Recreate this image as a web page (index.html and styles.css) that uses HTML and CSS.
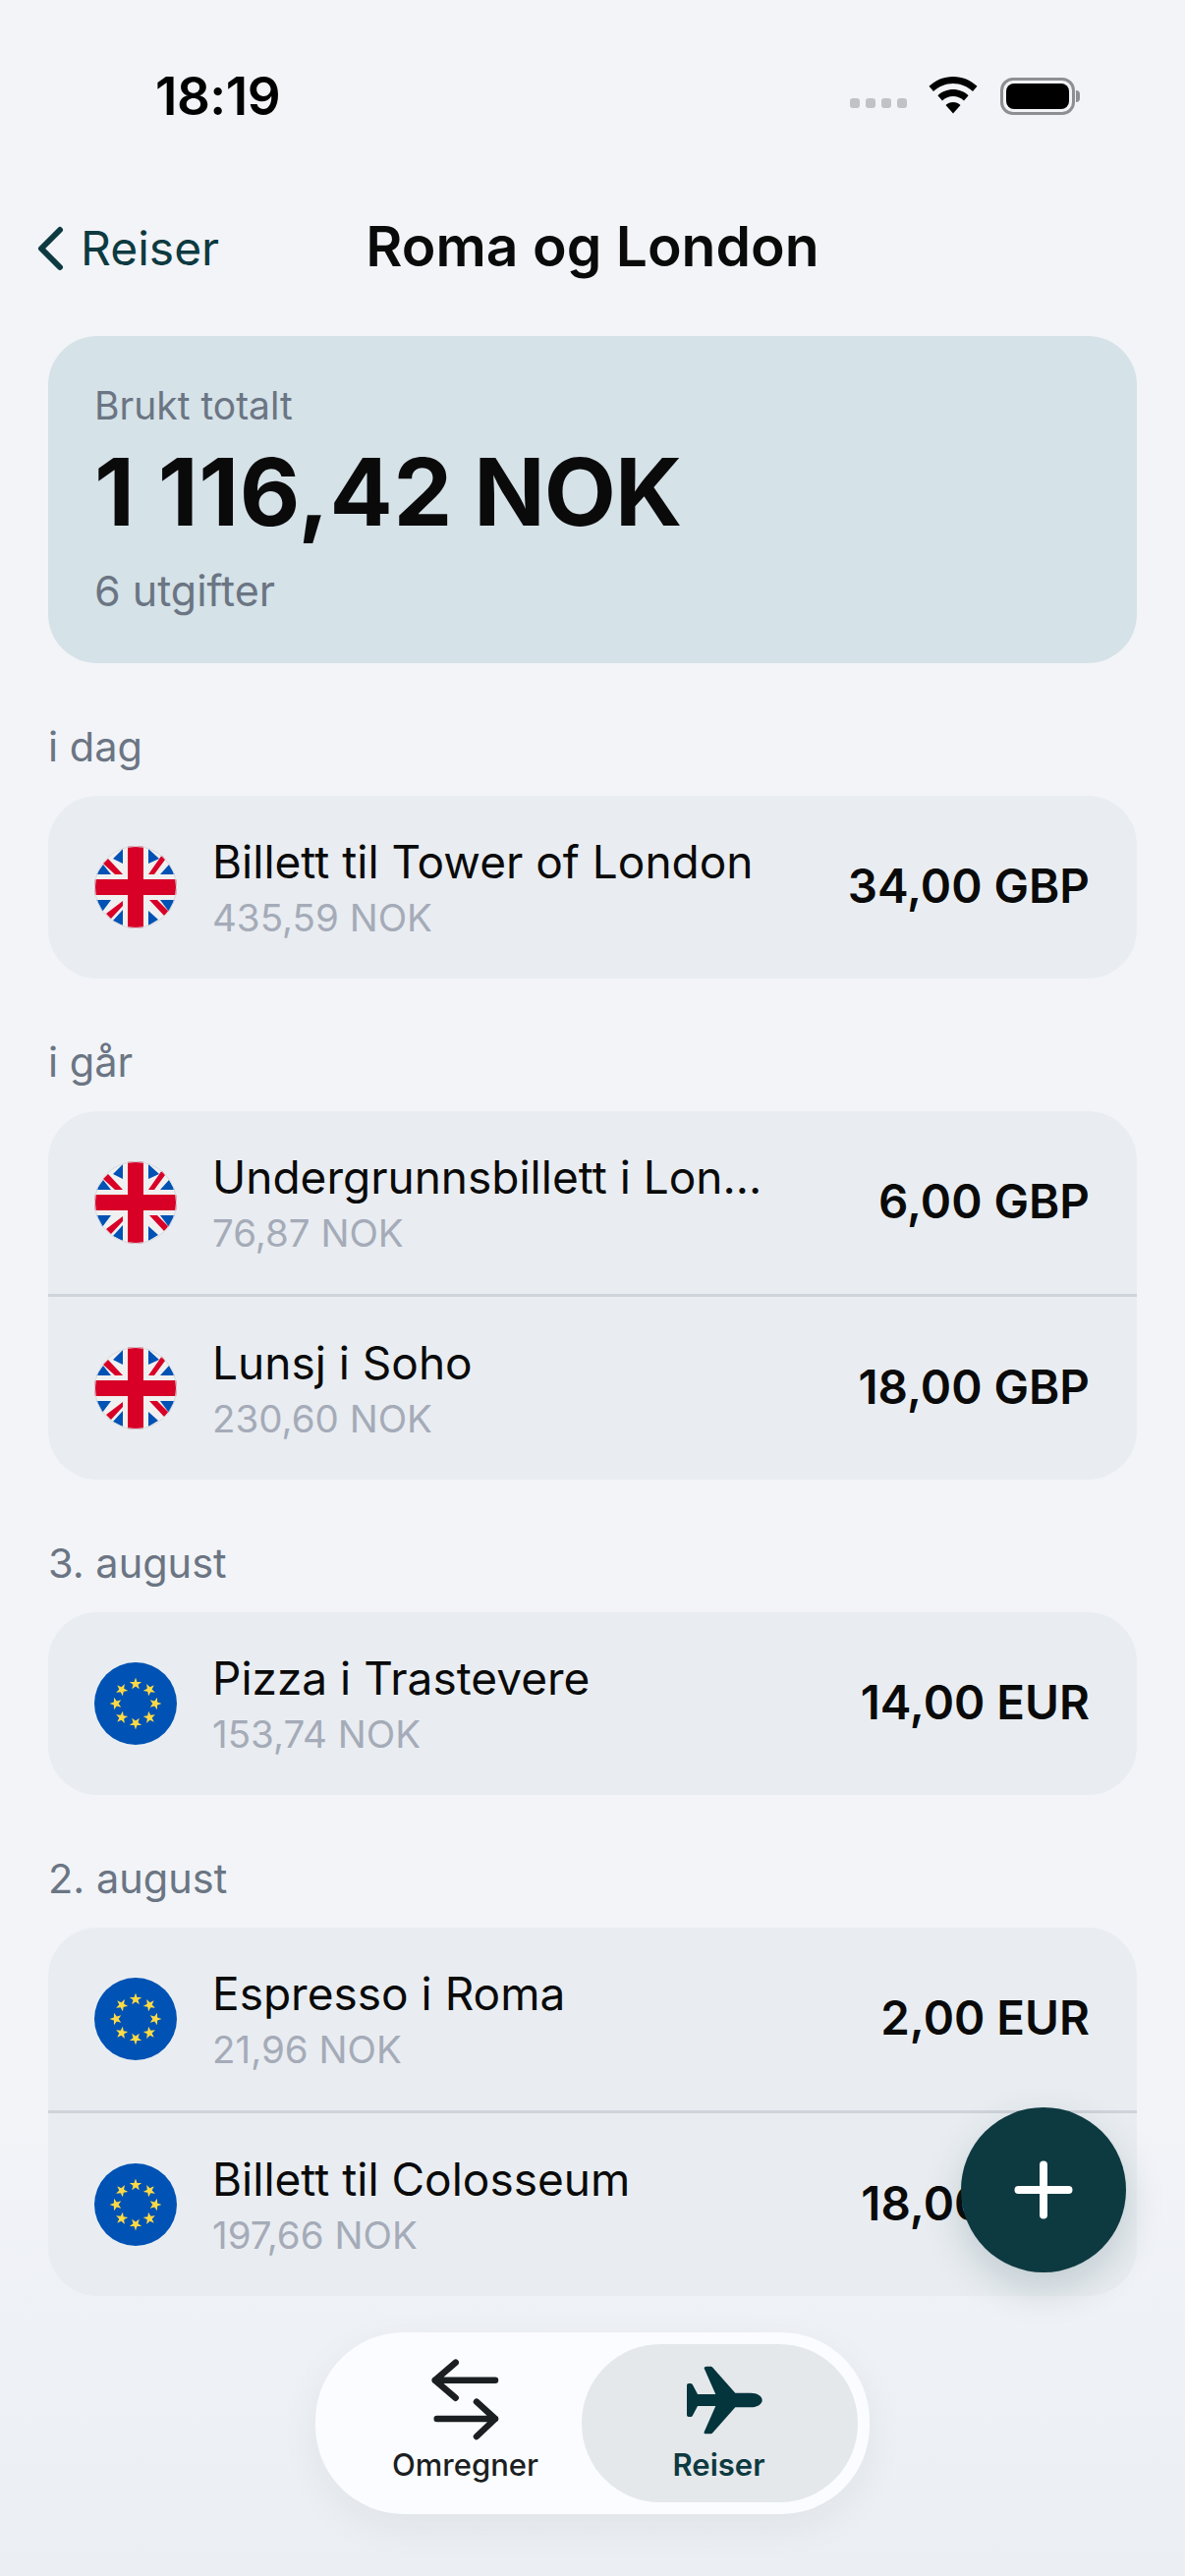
FILE: index.html

```html
<!DOCTYPE html>
<html lang="nb">

<head>
    <meta charset="UTF-8">
    <meta name="viewport" content="width=device-width, initial-scale=1.0">
    <title>Roma og London</title>
    <link rel="stylesheet" href="styles.css">
</head>

<body>
    <svg class="defs" width="0" height="0">
        <defs>
            <clipPath id="flag_clip"><circle cx="42" cy="42" r="42" /></clipPath>
            <symbol id="flag_uk" viewBox="0 0 84 84">
                <g clip-path="url(#flag_clip)">
                    <rect width="84" height="84" fill="#f0f0f0" />
                    <path d="M19 13L29 3V18ZM2 29L9 19L17 29ZM55 3L66 13L55 18ZM67 29L76 19L82 29ZM2 55H17L8 67ZM19 76L29 65V81ZM55 66L65 75L55 81ZM67 55H82L76 67Z" fill="#0052b4" />
                    <path d="M9 18L14 13L29 29H21ZM55 29L69 9L72 14L61 29ZM12 69L29 56V61L17 74ZM56 55H64L76 67L71 71Z" fill="#d80027" />
                    <path d="M34 0H50V34H84V50H50V84H34V50H0V34H34Z" fill="#d80027" />
                </g>
                <circle cx="42" cy="42" r="41.500" fill="none" stroke="#d5d8dd" />
            </symbol>
            <symbol id="flag_eu" viewBox="0 0 84 84">
                <circle cx="42" cy="42" r="42" fill="#0052b4" />
                <g fill="#ffda44">
                    <path id="eu_star" d="M42 15.500L43.500 19.900L48.200 20L44.500 22.800L45.800 27.300L42 24.600L38.200 27.300L39.500 22.800L35.800 20L40.500 19.900Z" />
                    <use href="#eu_star" transform="rotate(45 42 42)" />
                    <use href="#eu_star" transform="rotate(90 42 42)" />
                    <use href="#eu_star" transform="rotate(135 42 42)" />
                    <use href="#eu_star" transform="rotate(180 42 42)" />
                    <use href="#eu_star" transform="rotate(225 42 42)" />
                    <use href="#eu_star" transform="rotate(270 42 42)" />
                    <use href="#eu_star" transform="rotate(315 42 42)" />
                </g>
            </symbol>
        </defs>
    </svg>

    <div class="fade"></div>

    <div class="status-bar">
        <span class="clock">18:19</span>
        <div class="status-icons">
            <div class="signal"><i></i><i></i><i></i><i></i></div>
            <svg class="wifi" width="50" height="38" viewBox="0 0 50 38">
                <path d="M25 0C34.500 0 43 3.700 49.500 9.800L45 15C39.700 10 32.700 7 25 7S10.300 10 5 15L.5 9.800C7 3.700 15.500 0 25 0Z" />
                <path d="M25 13C31 13 36.500 15.300 40.600 19.200L36 24.400C33 21.700 29.200 20 25 20S17 21.700 14 24.400L9.400 19.200C13.500 15.300 19 13 25 13Z" />
                <path d="M25 26C28 26 30.500 27 32.500 29L25 37.500L17.500 29C19.500 27 22 26 25 26Z" />
            </svg>
            <div class="battery">
                <div class="battery-shell"><div class="battery-fill"></div></div>
                <div class="battery-cap"></div>
            </div>
        </div>
    </div>

    <div class="nav">
        <a class="back">
            <svg width="30" height="46" viewBox="0 0 30 46">
                <path d="M25 4L6 23L25 42" fill="none" stroke="#0d3a40" stroke-width="6" stroke-linecap="round" stroke-linejoin="round" />
            </svg>
            <span>Reiser</span>
        </a>
        <h1 class="nav-title">Roma og London</h1>
    </div>

    <div class="content">
        <div class="total">
            <div class="total-label">Brukt totalt</div>
            <div class="total-sum"><span class="total-amount">1 116,42</span> NOK</div>
            <div class="total-count">6 utgifter</div>
        </div>

        <div class="day">i dag</div>
        <div class="group">
            <div class="row">
                <svg class="flag"><use href="#flag_uk" /></svg>
                <div class="row-text">
                    <div class="row-name">Billett til Tower of London</div>
                    <div class="row-nok">435,59 NOK</div>
                </div>
                <div class="row-sum">34,00 GBP</div>
            </div>
        </div>

        <div class="day">i går</div>
        <div class="group">
            <div class="row">
                <svg class="flag"><use href="#flag_uk" /></svg>
                <div class="row-text">
                    <div class="row-name">Undergrunnsbillett i Lon...</div>
                    <div class="row-nok">76,87 NOK</div>
                </div>
                <div class="row-sum">6,00 GBP</div>
            </div>
            <div class="row">
                <svg class="flag"><use href="#flag_uk" /></svg>
                <div class="row-text">
                    <div class="row-name">Lunsj i Soho</div>
                    <div class="row-nok">230,60 NOK</div>
                </div>
                <div class="row-sum">18,00 GBP</div>
            </div>
        </div>

        <div class="day">3. august</div>
        <div class="group">
            <div class="row">
                <svg class="flag"><use href="#flag_eu" /></svg>
                <div class="row-text">
                    <div class="row-name">Pizza i Trastevere</div>
                    <div class="row-nok">153,74 NOK</div>
                </div>
                <div class="row-sum">14,00 EUR</div>
            </div>
        </div>

        <div class="day">2. august</div>
        <div class="group">
            <div class="row">
                <svg class="flag"><use href="#flag_eu" /></svg>
                <div class="row-text">
                    <div class="row-name">Espresso i Roma</div>
                    <div class="row-nok">21,96 NOK</div>
                </div>
                <div class="row-sum">2,00 EUR</div>
            </div>
            <div class="row">
                <svg class="flag"><use href="#flag_eu" /></svg>
                <div class="row-text">
                    <div class="row-name">Billett til Colosseum</div>
                    <div class="row-nok">197,66 NOK</div>
                </div>
                <div class="row-sum">18,00 EUR</div>
            </div>
        </div>
    </div>

    <button class="fab">
        <svg width="60" height="60" viewBox="0 0 60 60">
            <path d="M30 4.500V55.500M4.500 30H55.500" fill="none" stroke="#fff" stroke-width="8" stroke-linecap="round" />
        </svg>
    </button>

    <div class="tabs">
        <div class="tab tab-convert">
            <svg width="72" height="84" viewBox="0 0 72 84">
                <path d="M66 22.700H4.700M25.700 4.700L4.700 22.700L25.700 40.700M6.700 62H66M47 44.700L66 62L47 80" fill="none" stroke="#1c1f22" stroke-width="6.500" stroke-linecap="round" stroke-linejoin="round" />
            </svg>
            <span>Omregner</span>
        </div>
        <div class="tab tab-active">
            <svg width="77" height="70" viewBox="0 0 77 70">
                <path d="M20 .7H24C25 .7 26 1.200 26.500 2L49.300 27.700H65C72 27.700 76.700 31 76.700 35S72 42.300 65 42.300H49.300L26.500 68C26 68.800 25 69.300 24 69.300H19C17.800 69.300 17.200 68.300 17.700 67.200L29.300 41H11L6 50.500C5.500 51.500 4.500 52 3.500 52H2C.8 52 0 51.200 0 50V20C0 18.800 .8 18 2 18H3.500C4.500 18 5.500 18.500 6 19.500L11 29H29.300L17.700 2.800C17.200 1.700 18.800 .7 20 .7Z" fill="#04343c" />
            </svg>
            <span>Reiser</span>
        </div>
    </div>
</body>

</html>
```

FILE: styles.css

```css
* {
    box-sizing: border-box;
}

body {
    margin: 0;
    width: 1206px;
    height: 2622px;
    position: relative;
    overflow: hidden;
    background: #f2f4f8;
    font-family: Inter, "Noto Sans", sans-serif;
    color: #0a0a0a;
}

.defs {
    display: block;
    height: 0;
}

.status-bar {
    height: 190px;
    padding: 66px 107px 0 158px;
    display: flex;
    justify-content: space-between;
    align-items: flex-start;
    position: relative;
}

.clock {
    font-size: 53px;
    line-height: 64px;
    font-weight: 600;
    letter-spacing: -0.5px;
    color: #000;
}

.status-icons {
    display: flex;
    align-items: center;
    height: 64px;
}

.signal {
    display: flex;
    gap: 6px;
    margin: 14px 22px 0 0;
}

.signal i {
    display: block;
    width: 10px;
    height: 10px;
    border-radius: 3px;
    background: #c0c2c6;
}

.wifi {
    fill: #000;
    margin: -2px 23px 0 0;
}

.battery {
    display: flex;
    align-items: center;
    gap: 1px;
}

.battery-shell {
    width: 76px;
    height: 38px;
    padding: 3px;
    border: 3px solid #8e8f92;
    border-radius: 13px;
}

.battery-fill {
    width: 100%;
    height: 100%;
    background: #000;
    border-radius: 8px;
}

.battery-cap {
    width: 4px;
    height: 12px;
    background: #8e8f92;
    border-radius: 0 4px 4px 0;
}

.nav {
    height: 152px;
    display: flex;
    position: relative;
    justify-content: center;
}

.back {
    position: absolute;
    left: 36px;
    top: 33px;
    display: flex;
    align-items: center;
    gap: 16px;
    font-size: 48px;
    color: #0d3a40;
}

.nav-title {
    margin: 28px 0 0;
    font-size: 57px;
    line-height: 66px;
    font-weight: 600;
}

.content {
    padding: 0 49px;
    position: relative;
}

.total {
    height: 333px;
    padding: 48px 47px 0;
    border-radius: 50px;
    background: #d5e2e8;
}

.total-label {
    font-size: 39px;
    line-height: 46px;
    color: #6b7583;
}

.total-count {
    font-size: 43px;
    line-height: 50px;
    margin-top: -1px;
    color: #6b7583;
}

.total-sum {
    font-size: 95px;
    line-height: 112px;
    font-weight: 700;
    letter-spacing: -1px;
    margin: 9px 0 20px;
}

.total-amount {
    letter-spacing: 0.6px;
}

.day {
    font-size: 41.5px;
    line-height: 46px;
    color: #6b7583;
    margin: 62px 0 27px;
}

.group {
    border-radius: 50px;
    background: #e9edf1;
    overflow: hidden;
}

.row {
    height: 186px;
    padding: 0 48px 0 47px;
    display: flex;
    align-items: center;
    gap: 36px;
}

.row + .row {
    height: 189px;
    border-top: 3px solid #cfd3da;
}

.flag {
    width: 84px;
    height: 84px;
    flex: none;
}

.row-text {
    flex: 1;
    min-width: 0;
}

.row-name {
    font-size: 46px;
    line-height: 54px;
}

.row-nok {
    font-size: 38.5px;
    line-height: 44px;
    margin-top: 8px;
    color: #a5abb8;
}

.row-sum {
    font-size: 47.5px;
    font-weight: 600;
    margin-bottom: 3px;
}

.fade {
    position: absolute;
    left: 0;
    right: 0;
    bottom: 0;
    height: 500px;
    background: linear-gradient(to bottom, rgba(232, 236, 240, 0), rgba(232, 236, 240, 0.7));
}

.fab {
    position: absolute;
    left: 978px;
    top: 2145px;
    width: 168px;
    height: 168px;
    padding: 0;
    border: 0;
    border-radius: 50%;
    background: #0d3a40;
    display: flex;
    align-items: center;
    justify-content: center;
    box-shadow: 0 16px 40px rgba(13, 58, 64, 0.18);
}

.tabs {
    position: absolute;
    left: 321px;
    top: 2374px;
    width: 564px;
    height: 185px;
    padding: 12px;
    border-radius: 90px;
    background: #fafcff;
    display: flex;
    box-shadow: 0 12px 40px rgba(30, 40, 50, 0.06);
}

.tab {
    display: flex;
    flex-direction: column;
    align-items: center;
    justify-content: flex-end;
    padding-bottom: 21px;
    font-size: 31px;
    line-height: 34px;
    font-weight: 500;
    color: #1c1f22;
}

.tab svg {
    margin-bottom: 8px;
}

.tab-convert {
    width: 259px;
    padding-left: 22px;
}

.tab-active {
    width: 281px;
    padding-right: 2px;
    border-radius: 80px;
    background: #e5e8eb;
    color: #0d3a40;
    font-weight: 600;
}

.tab-active svg {
    margin: 0 0 14px 12px;
}
```
